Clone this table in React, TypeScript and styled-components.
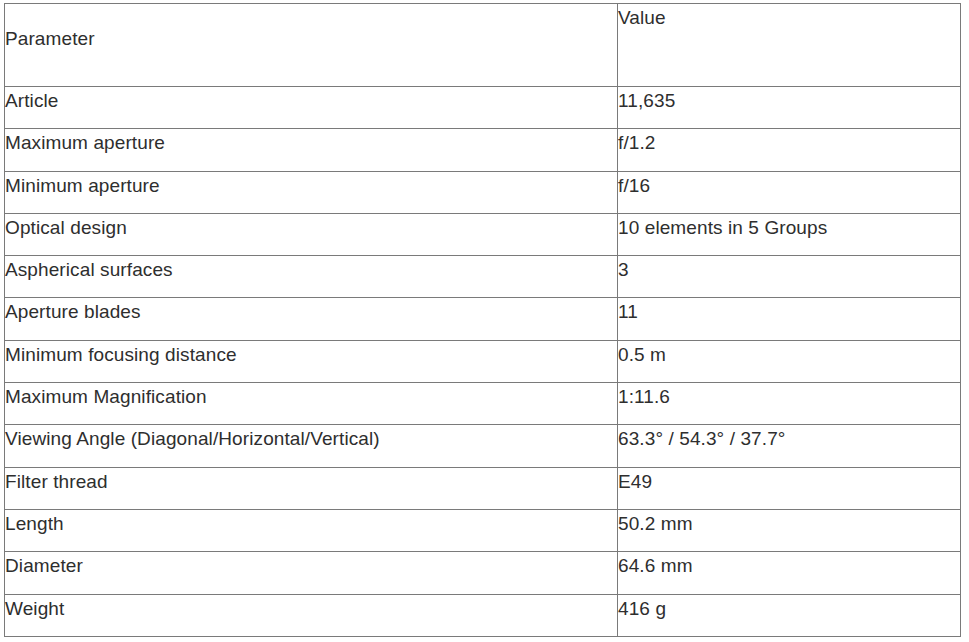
import React from "react";
import styled, { createGlobalStyle } from "styled-components";

const GlobalStyle = createGlobalStyle`
  html, body {
    margin: 0;
    padding: 0;
    background: #ffffff;
  }
  body {
    font-family: "Liberation Sans", Arial, sans-serif;
    color: #2e2e2e;
  }
`;

const Page = styled.div`
  padding: 3px 0 0 4px;
`;

const SpecTable = styled.table`
  border-collapse: collapse;
  width: 957px;
  table-layout: fixed;
  font-size: 19px;
  line-height: 22px;
  letter-spacing: 0.1px;
`;

const Cell = styled.td<{ $offset?: number; $width?: number }>`
  border: 1px solid #7a7a7a;
  padding: ${(p) => 3 + (p.$offset || 0)}px 0 0 0;
  vertical-align: top;
  width: ${(p) => (p.$width ? `${p.$width}px` : "auto")};
`;

const HeadRow = styled.tr`
  height: 83px;
`;

const Row = styled.tr`
  height: 42.3px;
`;

const specs: [string, string][] = [
  ["Article", "11,635"],
  ["Maximum aperture", "f/1.2"],
  ["Minimum aperture", "f/16"],
  ["Optical design", "10 elements in 5 Groups"],
  ["Aspherical surfaces", "3"],
  ["Aperture blades", "11"],
  ["Minimum focusing distance", "0.5 m"],
  ["Maximum Magnification", "1:11.6"],
  ["Viewing Angle (Diagonal/Horizontal/Vertical)", "63.3° / 54.3° / 37.7°"],
  ["Filter thread", "E49"],
  ["Length", "50.2 mm"],
  ["Diameter", "64.6 mm"],
  ["Weight", "416 g"],
];

export default function App() {
  return (
    <Page>
      <GlobalStyle />
      <SpecTable>
        <tbody>
          <HeadRow>
            <Cell $offset={21} $width={612}>Parameter</Cell>
            <Cell>Value</Cell>
          </HeadRow>
          {specs.map(([name, value]) => (
            <Row key={name}>
              <Cell>{name}</Cell>
              <Cell>{value}</Cell>
            </Row>
          ))}
        </tbody>
      </SpecTable>
    </Page>
  );
}
